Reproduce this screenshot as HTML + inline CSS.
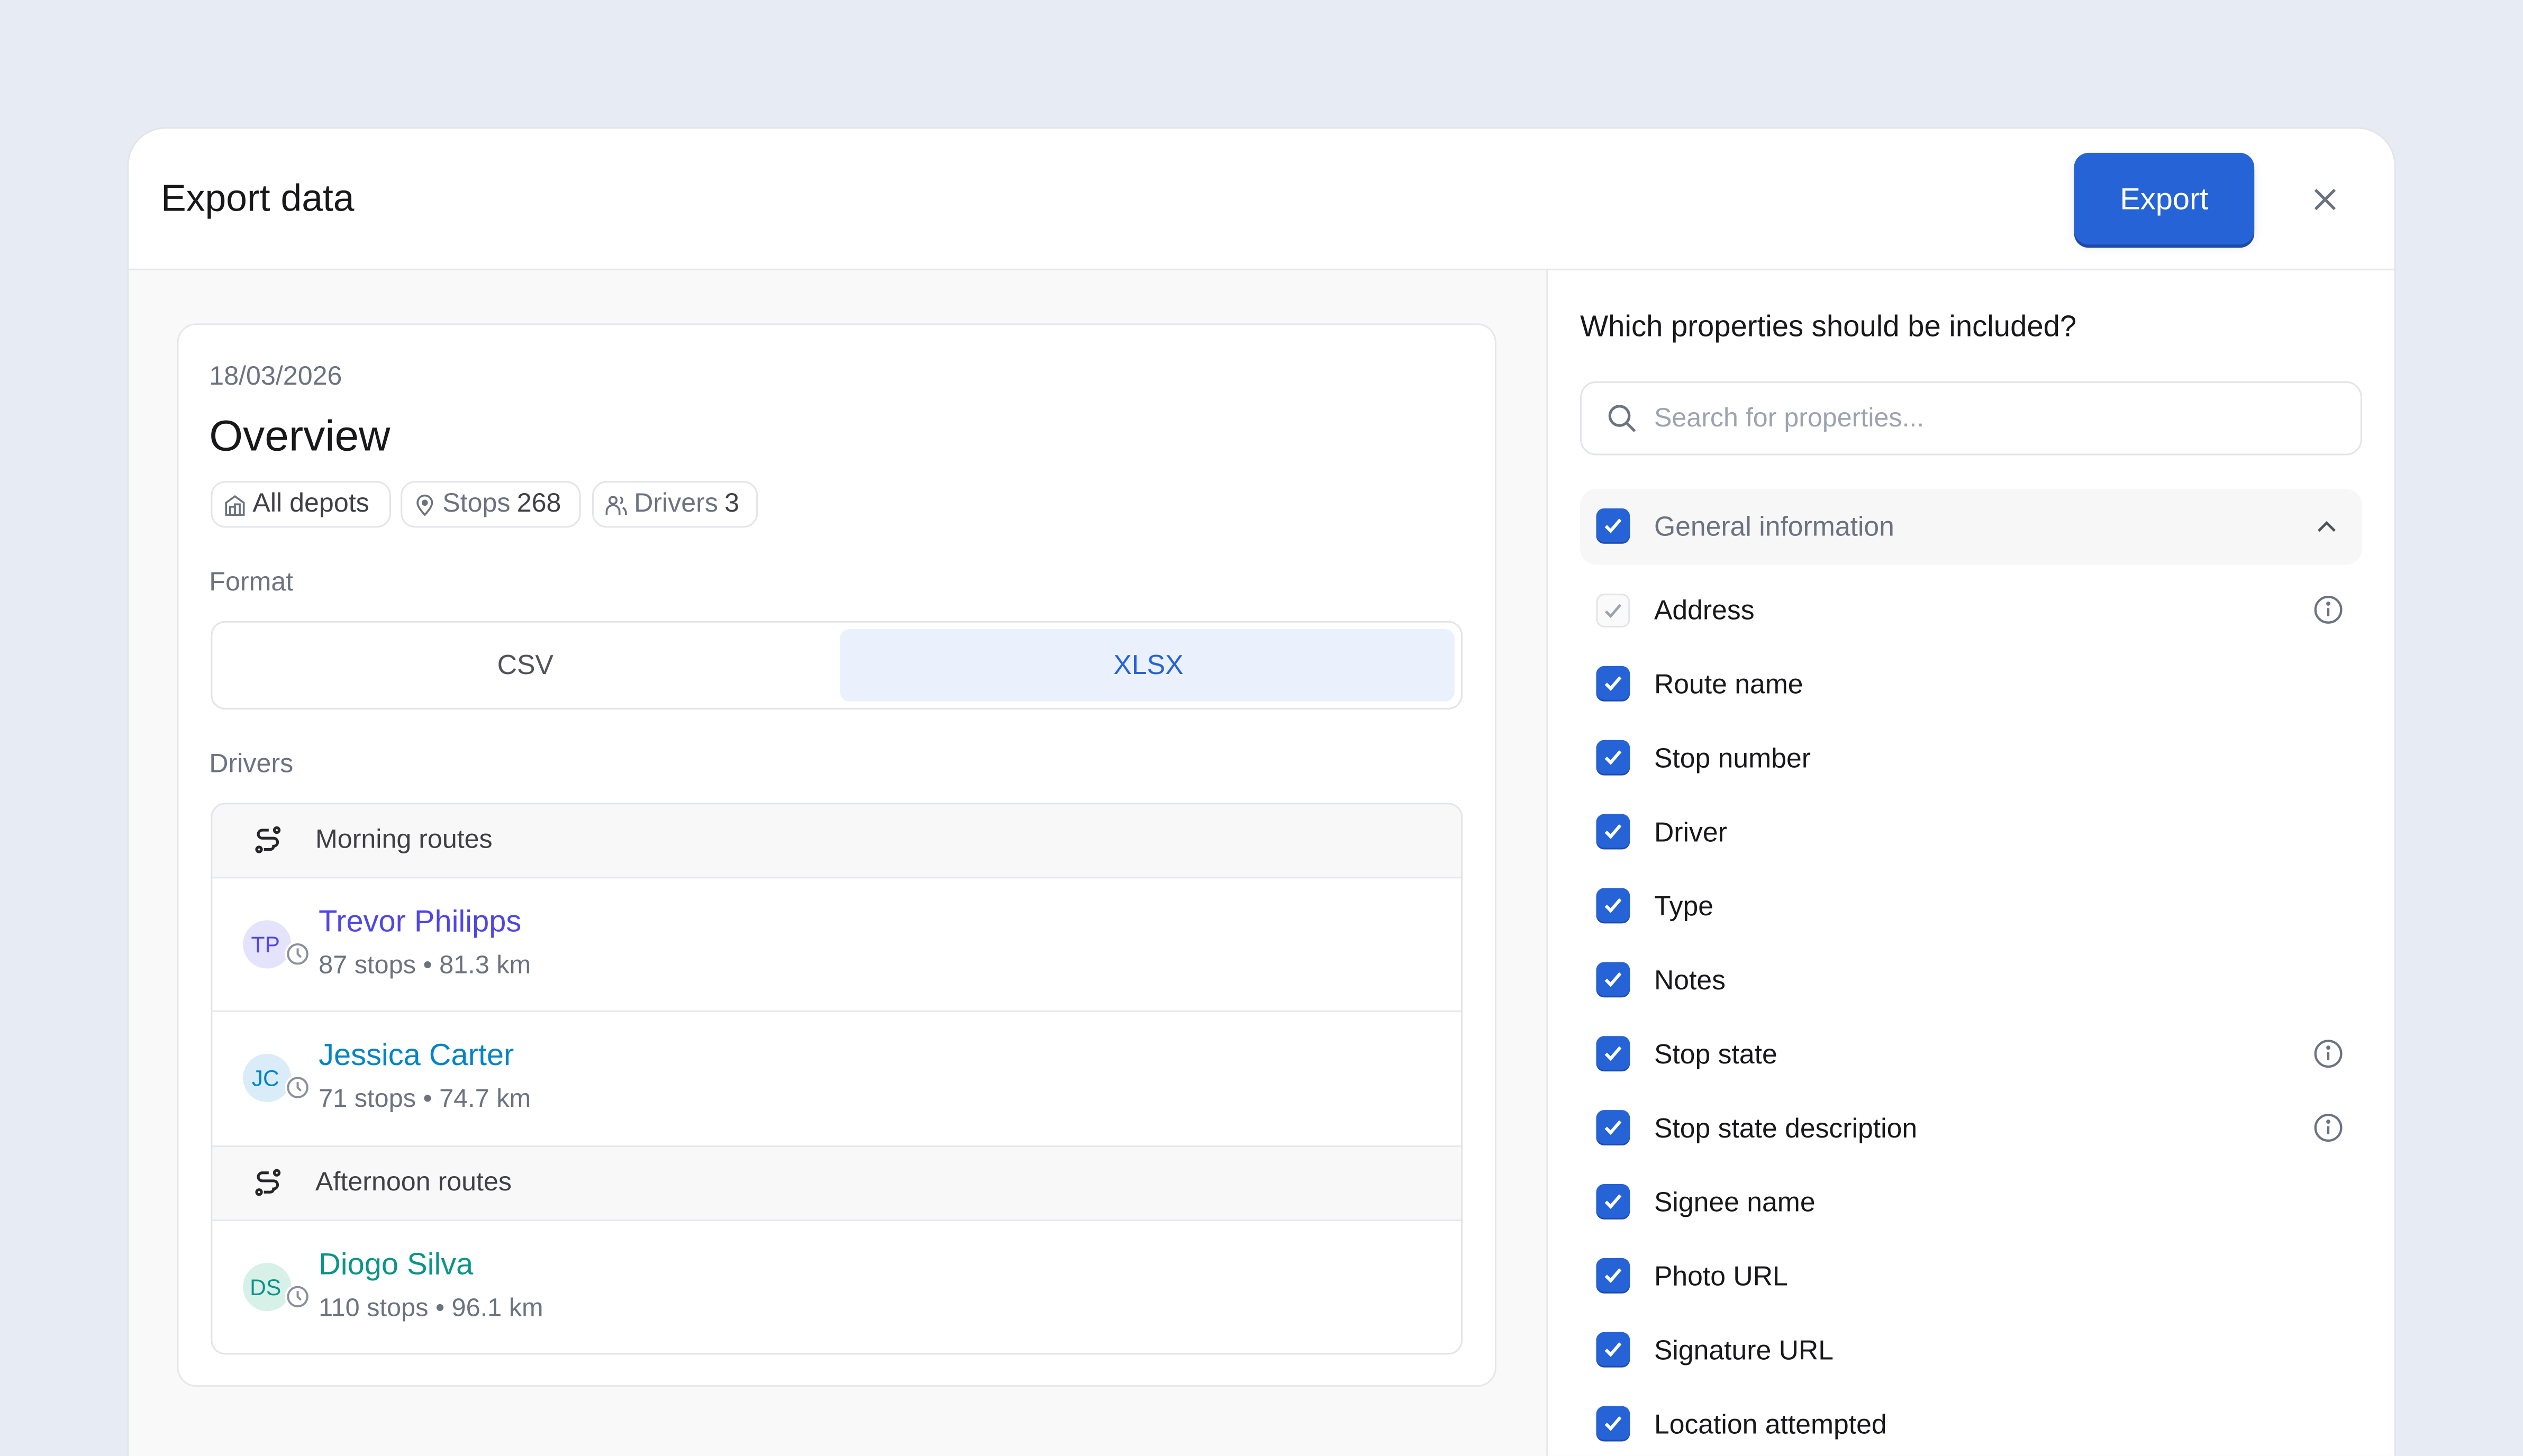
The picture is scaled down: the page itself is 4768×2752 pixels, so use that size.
<!DOCTYPE html>
<html><head><meta charset="utf-8"><style>
*{box-sizing:border-box;margin:0;padding:0}
html,body{width:4768px;height:2752px;overflow:hidden;background:#e7ebf3}
#w{position:absolute;left:0;top:0;width:1568px;height:905px;overflow:hidden;transform:scale(3.0408);transform-origin:0 0;font-family:"Liberation Sans",sans-serif;color:#18181b}
.a{position:absolute}
.modal{left:79px;top:79px;width:1410px;height:860px;background:#fff;border:1px solid #e2e4ea;border-radius:24px;overflow:hidden}
.t{white-space:nowrap}
.chip{position:absolute;top:299px;height:29px;border:1px solid #e2e4ea;border-radius:9px;font-size:16.5px;color:#6b7280;display:flex;align-items:center;padding-left:7px;gap:4px}
.chip b{font-weight:normal;color:#3f3f46}
.cb{position:absolute;left:992px;width:21px;height:21px;border-radius:5px;background:#2563d6;box-shadow:0 1px 0 #1c4bb0}
.lbl{position:absolute;left:1028px;font-size:17px;color:#18181b}
.row{position:absolute;left:131px;width:777px;border-top:1px solid #e5e7eb}
.av{position:absolute;left:151px;width:30px;height:30px;border-radius:50%;font-size:14px;display:flex;align-items:center;justify-content:center;padding-right:2px}
.nm{position:absolute;left:198px;font-size:19px}
.sub{position:absolute;left:198px;font-size:16px;color:#6b7280}
</style></head><body><div id="w">
<div class="a modal"></div>
<div class="a" style="left:80px;top:167px;width:881px;height:738px;background:#f9f9f9"></div>
<div class="a" style="left:80px;top:167px;width:1408px;height:1px;background:#e5e7eb"></div>
<div class="a" style="left:961px;top:167px;width:1px;height:738px;background:#e5e7eb"></div>
<div class="a t" style="left:100px;top:110px;font-size:23.5px">Export data</div>
<div class="a" style="left:1289px;top:95px;width:112px;height:57px;background:#2563d6;border-radius:9px;box-shadow:0 2px 0 #1d4aa6,0 2px 6px rgba(0,0,0,.08);color:#fff;font-size:19px;display:flex;align-items:center;justify-content:center;padding-top:2px">Export</div>
<svg class="a" style="left:1437px;top:116px" width="16" height="16" viewBox="0 0 16 16"><path d="M2 2L14 14M14 2L2 14" stroke="#6b7280" stroke-width="1.8"/></svg>

<div class="a" style="left:110px;top:201px;width:820px;height:661px;background:#fff;border:1px solid #e5e7eb;border-radius:12px"></div>
<div class="a t" style="left:130px;top:225px;font-size:16.5px;color:#6b7280">18/03/2026</div>
<div class="a t" style="left:130px;top:256px;font-size:27px">Overview</div>
<div class="chip" style="left:131px;width:112px"><svg width="14" height="14" viewBox="0 0 14 14" fill="none" stroke="#6b7280" stroke-width="1.2"><path d="M1.5 13V5.5L7 1.5l5.5 4V13z"/><rect x="4" y="8" width="3" height="5"/><rect x="7" y="6.5" width="3" height="6.5"/></svg><b>All depots</b></div>
<div class="chip" style="left:249px;width:112px"><svg width="14" height="14" viewBox="0 0 14 14" fill="none" stroke="#6b7280" stroke-width="1.2"><path d="M7 13S2.5 8.5 2.5 5.5a4.5 4.5 0 019 0C11.5 8.5 7 13 7 13z"/><circle cx="7" cy="5.5" r="1.3" fill="#6b7280"/></svg>Stops <b>268</b></div>
<div class="chip" style="left:368px;width:103px"><svg width="14" height="14" viewBox="0 0 14 14" fill="none" stroke="#6b7280" stroke-width="1.2"><circle cx="5" cy="4" r="2.2"/><path d="M1 13v-2a4 4 0 018 0v2M9.5 2a2.2 2.2 0 010 4M11 8.5a4 4 0 012 3.5v1"/></svg>Drivers <b>3</b></div>
<div class="a t" style="left:130px;top:353px;font-size:16.5px;color:#6b7280">Format</div>
<div class="a" style="left:131px;top:386px;width:778px;height:55px;border:1px solid #e2e4ea;border-radius:9px"></div>
<div class="a" style="left:522px;top:391px;width:382px;height:45px;background:#eaf1fd;border-radius:6px"></div>
<div class="a t" style="left:309px;top:404px;font-size:17px;color:#52525b">CSV</div>
<div class="a t" style="left:692px;top:404px;font-size:17px;color:#2563d6">XLSX</div>
<div class="a t" style="left:130px;top:466px;font-size:16.5px;color:#6b7280">Drivers</div>

<div class="a" style="left:131px;top:499px;width:778px;height:343px;border:1px solid #e2e4ea;border-radius:9px;overflow:hidden;background:#fff">
<div class="a" style="left:0;top:0;width:778px;height:46px;background:#f8f8f8"></div>
<div class="a" style="left:0;top:212px;width:778px;height:46px;background:#f8f8f8;border-top:1px solid #e5e7eb"></div>
</div>
<div class="row" style="top:545px"></div>
<div class="row" style="top:628px"></div>
<div class="row" style="top:758px"></div>
<svg class="a" style="left:158px;top:513px" width="18" height="18" viewBox="0 0 18 18" fill="none" stroke="#27272a" stroke-width="1.7"><circle cx="14" cy="3" r="1.5"/><circle cx="3" cy="15" r="1.5"/><path d="M9 3H5a2.5 2.5 0 000 5h7a2.5 2.5 0 010 5v0a2 2 0 01-2 2H6"/></svg>
<div class="a t" style="left:196px;top:513px;font-size:16.5px;color:#3f3f46">Morning routes</div>
<svg class="a" style="left:158px;top:726px" width="18" height="18" viewBox="0 0 18 18" fill="none" stroke="#27272a" stroke-width="1.7"><circle cx="14" cy="3" r="1.5"/><circle cx="3" cy="15" r="1.5"/><path d="M9 3H5a2.5 2.5 0 000 5h7a2.5 2.5 0 010 5v0a2 2 0 01-2 2H6"/></svg>
<div class="a t" style="left:196px;top:726px;font-size:16.5px;color:#3f3f46">Afternoon routes</div>

<div class="av" style="top:572px;background:#e5e3fb;color:#4f46e5">TP</div>
<div class="av" style="top:655px;background:#d9ecf7;color:#0284c7">JC</div>
<div class="av" style="top:785px;background:#d7f0e8;color:#0d9488">DS</div>
<svg class="a" style="left:176px;top:584px" width="18" height="18" viewBox="0 0 18 18"><circle cx="9" cy="9" r="8" fill="#fff"/><circle cx="9" cy="9" r="6" fill="none" stroke="#8a8f9c" stroke-width="1.3"/><path d="M9 5.5V9l2 2" fill="none" stroke="#8a8f9c" stroke-width="1.3"/></svg>
<svg class="a" style="left:176px;top:667px" width="18" height="18" viewBox="0 0 18 18"><circle cx="9" cy="9" r="8" fill="#fff"/><circle cx="9" cy="9" r="6" fill="none" stroke="#8a8f9c" stroke-width="1.3"/><path d="M9 5.5V9l2 2" fill="none" stroke="#8a8f9c" stroke-width="1.3"/></svg>
<svg class="a" style="left:176px;top:797px" width="18" height="18" viewBox="0 0 18 18"><circle cx="9" cy="9" r="8" fill="#fff"/><circle cx="9" cy="9" r="6" fill="none" stroke="#8a8f9c" stroke-width="1.3"/><path d="M9 5.5V9l2 2" fill="none" stroke="#8a8f9c" stroke-width="1.3"/></svg>
<div class="nm t" style="top:563px;color:#4f46e5">Trevor Philipps</div>
<div class="sub t" style="top:592px">87 stops • 81.3 km</div>
<div class="nm t" style="top:646px;color:#0284c7">Jessica Carter</div>
<div class="sub t" style="top:675px">71 stops • 74.7 km</div>
<div class="nm t" style="top:776px;color:#0d9488">Diogo Silva</div>
<div class="sub t" style="top:805px">110 stops • 96.1 km</div>

<div class="a t" style="left:982px;top:192px;font-size:18.5px;color:#18181b">Which properties should be included?</div>
<div class="a" style="left:982px;top:237px;width:486px;height:46px;border:1px solid #e2e4ea;border-radius:10px"></div>
<svg class="a" style="left:998px;top:250px" width="20" height="20" viewBox="0 0 20 20" fill="none" stroke="#6b7280" stroke-width="1.7"><circle cx="8.5" cy="8.5" r="6"/><path d="M13 13l5 5"/></svg>
<div class="a t" style="left:1028px;top:251px;font-size:16.5px;color:#9ca3af">Search for properties...</div>
<div class="a" style="left:982px;top:304px;width:486px;height:47px;background:#f7f7f8;border-radius:10px"></div>
<svg class="a" style="left:1439px;top:321px" width="14" height="12" viewBox="0 0 14 12"><path d="M2 9l5-5 5 5" fill="none" stroke="#52525b" stroke-width="1.6"/></svg>
<div class="a" style="left:992px;top:369px;width:21px;height:21px;border:1px solid #e2e4ea;border-radius:5px;background:#fafafa"></div>
<svg class="a" style="left:992px;top:369px" width="21" height="21" viewBox="0 0 21 21"><path d="M6 11l3 3 6-7" fill="none" stroke="#9ca3af" stroke-width="1.6"/></svg>

<div id="list"></div>
<script>
var items=[["General information",327,1],["Address",379,0],["Route name",425,1],["Stop number",471,1],["Driver",517,1],["Type",563,1],["Notes",609,1],["Stop state",655,1],["Stop state description",701,1],["Signee name",747,1],["Photo URL",793,1],["Signature URL",839,1],["Location attempted",885,1]];
var h="";
items.forEach(function(it,i){var y=it[1];
if(it[2])h+='<div class="cb" style="top:'+(y-11)+'px"></div><svg class="a" style="left:992px;top:'+(y-11)+'px" width="21" height="21" viewBox="0 0 21 21"><path d="M6 11l3 3 6-7" fill="none" stroke="#fff" stroke-width="2"/></svg>';
h+='<div class="lbl t" style="top:'+(y-9)+'px;'+(i==0?'color:#6b7280':'')+'">'+it[0]+'</div>';
if(y==379||y==655||y==701)h+='<svg class="a" style="left:1437px;top:'+(y-10)+'px" width="20" height="20" viewBox="0 0 20 20" fill="none" stroke="#6b7280" stroke-width="1.4"><circle cx="10" cy="10" r="8"/><path d="M10 9v5"/><circle cx="10" cy="6.2" r=".6" fill="#6b7280"/></svg>';
});
document.getElementById("list").outerHTML=h;
</script>
</div></body></html>
